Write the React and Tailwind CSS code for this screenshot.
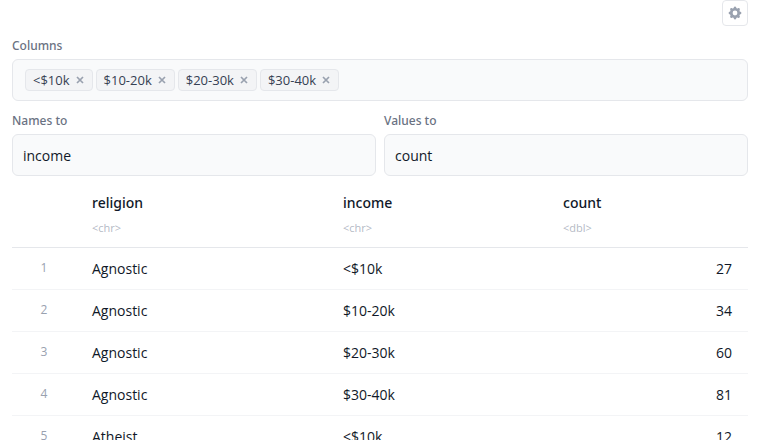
import React, { useState } from "react";
import { HiCog } from "react-icons/hi";

const initialColumns = ["<$10k", "$10-20k", "$20-30k", "$30-40k"];

const religions = [
  { religion: "Agnostic", "<$10k": 27, "$10-20k": 34, "$20-30k": 60, "$30-40k": 81 },
  { religion: "Atheist", "<$10k": 12, "$10-20k": 27, "$20-30k": 37, "$30-40k": 52 },
];

function pivotLonger(data, columns) {
  return data.flatMap((d) =>
    columns.map((c) => ({ religion: d.religion, name: c, value: d[c] }))
  );
}

function Tag({ label, onRemove }) {
  return (
    <span className="flex h-[22px] items-center gap-[6px] rounded border border-gray-200 bg-gray-100 pr-2 pl-[7px] text-[13px] leading-5 text-gray-700">
      {label}
      <button type="button" aria-label={`Remove ${label}`} onClick={onRemove} className="text-gray-400 hover:text-gray-600">
        <svg viewBox="0 0 8 8" className="block size-2" fill="none" stroke="currentColor" strokeWidth="1.7">
          <path d="M1 1l6 6M7 1l-6 6" />
        </svg>
      </button>
    </span>
  );
}

function TextField({ id, label, value, onChange }) {
  return (
    <div className="flex min-w-0 flex-1 flex-col gap-[3px]">
      <label htmlFor={id} className="font-['Noto_Sans',sans-serif] text-xs leading-5 font-medium text-gray-500">{label}</label>
      <input
        id={id}
        type="text"
        value={value}
        onChange={(e) => onChange(e.target.value)}
        className="h-[42px] w-full rounded-md border border-gray-200 bg-gray-50 px-[10px] text-sm text-gray-900 outline-none focus:border-gray-300"
      />
    </div>
  );
}

export default function App() {
  const [columns, setColumns] = useState(initialColumns);
  const [namesTo, setNamesTo] = useState("income");
  const [valuesTo, setValuesTo] = useState("count");

  const rows = pivotLonger(religions, columns);
  const headers = [
    { name: "religion", type: "<chr>", width: "w-[34.1%]" },
    { name: namesTo, type: "<chr>", width: "w-[29.9%]" },
    { name: valuesTo, type: "<dbl>", width: "" },
  ];

  return (
    <div className="h-screen overflow-hidden bg-white px-3 font-['Open_Sans',sans-serif] text-gray-900">
      <div className="flex flex-col gap-[10px]">
        <div className="flex justify-end">
          <button type="button" aria-label="Settings" className="flex size-[26px] items-center justify-center rounded border border-gray-200 text-gray-400 hover:bg-gray-50">
            <HiCog className="size-4" />
          </button>
        </div>

        {/* Columns to pivot */}
        <div className="flex flex-col gap-[3px]">
          <span id="columns-label" className="font-['Noto_Sans',sans-serif] text-xs leading-5 font-medium text-gray-500">Columns</span>
          <div role="group" aria-labelledby="columns-label" className="flex min-h-[42px] flex-wrap items-center gap-[3px] rounded-md border border-gray-200 bg-gray-50 px-3">
            {columns.map((c) => (
              <Tag key={c} label={c} onRemove={() => setColumns((cs) => cs.filter((x) => x !== c))} />
            ))}
          </div>
        </div>

        <div className="flex gap-2">
          <TextField id="names-to" label="Names to" value={namesTo} onChange={setNamesTo} />
          <TextField id="values-to" label="Values to" value={valuesTo} onChange={setValuesTo} />
        </div>
      </div>

      {/* Result */}
      <table className="w-full table-fixed border-collapse text-sm">
        <thead>
          <tr className="border-b border-gray-200 text-left">
            <td className="w-16"></td>
            {headers.map((h, i) => (
              <th key={i} scope="col" className={`${h.width} px-4 pt-4 pb-[11px] font-medium`}>
                <div className="font-['Noto_Sans',sans-serif] leading-[22px]">{h.name}</div>
                <div className="mt-[6px] text-[11px] leading-4 font-normal text-gray-400/75">{h.type}</div>
              </th>
            ))}
          </tr>
        </thead>
        <tbody>
          {rows.map((r, i) => (
            <tr key={i} className="h-[42px] border-b border-gray-100">
              <td className="py-[10px] text-center align-top text-xs leading-5 text-gray-400">{i + 1}</td>
              <td className="px-4">{r.religion}</td>
              <td className="px-4">{r.name}</td>
              <td className="px-4 text-right">{r.value}</td>
            </tr>
          ))}
        </tbody>
      </table>
    </div>
  );
}
